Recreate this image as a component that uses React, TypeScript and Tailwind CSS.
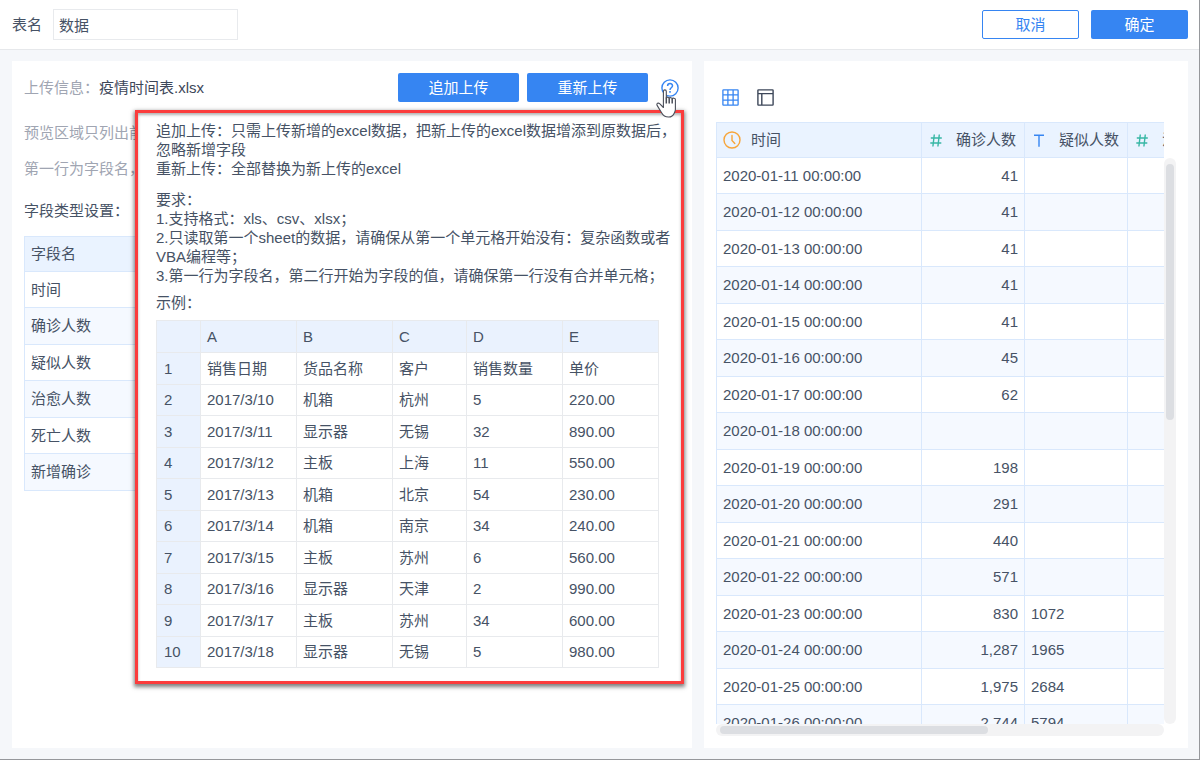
import { useState } from 'react';

const fields = ['时间', '确诊人数', '疑似人数', '治愈人数', '死亡人数', '新增确诊'];

const previewRows = [
  ['2020-01-11 00:00:00', '41', ''],
  ['2020-01-12 00:00:00', '41', ''],
  ['2020-01-13 00:00:00', '41', ''],
  ['2020-01-14 00:00:00', '41', ''],
  ['2020-01-15 00:00:00', '41', ''],
  ['2020-01-16 00:00:00', '45', ''],
  ['2020-01-17 00:00:00', '62', ''],
  ['2020-01-18 00:00:00', '', ''],
  ['2020-01-19 00:00:00', '198', ''],
  ['2020-01-20 00:00:00', '291', ''],
  ['2020-01-21 00:00:00', '440', ''],
  ['2020-01-22 00:00:00', '571', ''],
  ['2020-01-23 00:00:00', '830', '1072'],
  ['2020-01-24 00:00:00', '1,287', '1965'],
  ['2020-01-25 00:00:00', '1,975', '2684'],
  ['2020-01-26 00:00:00', '2,744', '5794'],
];

const sampleRows = [
  ['销售日期', '货品名称', '客户', '销售数量', '单价'],
  ['2017/3/10', '机箱', '杭州', '5', '220.00'],
  ['2017/3/11', '显示器', '无锡', '32', '890.00'],
  ['2017/3/12', '主板', '上海', '11', '550.00'],
  ['2017/3/13', '机箱', '北京', '54', '230.00'],
  ['2017/3/14', '机箱', '南京', '34', '240.00'],
  ['2017/3/15', '主板', '苏州', '6', '560.00'],
  ['2017/3/16', '显示器', '天津', '2', '990.00'],
  ['2017/3/17', '主板', '苏州', '34', '600.00'],
  ['2017/3/18', '显示器', '无锡', '5', '980.00'],
];

const GridIcon = () => (
  <svg className="w-[17px] h-[17px]" viewBox="0 0 17 17" fill="none" stroke="currentColor" strokeWidth="1.3">
    <rect x="0.9" y="0.9" width="15.2" height="15.2" rx="0.6" />
    <path d="M5.9 1v15M11.1 1v15M1 5.9h15M1 11.1h15" />
  </svg>
);

const LayoutIcon = () => (
  <svg className="w-[17px] h-[17px]" viewBox="0 0 17 17" fill="none" stroke="currentColor" strokeWidth="1.4">
    <rect x="0.9" y="0.9" width="15.2" height="15.2" rx="0.6" />
    <path d="M1 4.6h15M4.8 4.6V16" />
  </svg>
);

const ClockIcon = () => (
  <svg className="w-[18px] h-[18px] text-[#f7a53a]" viewBox="0 0 18 18" fill="none" stroke="currentColor" strokeWidth="1.4" strokeLinecap="round">
    <circle cx="9" cy="9" r="8" />
    <path d="M9 4.4V9.4l2.8 3" />
  </svg>
);

const HashIcon = () => (
  <svg className="w-3 h-[13px] text-[#37b7a5]" viewBox="0 0 12 13" fill="none" stroke="currentColor" strokeWidth="1.4">
    <path d="M4.3 0.5L2.9 12.5M9.3 0.5L7.9 12.5M0.8 4h11M0.3 9h11" />
  </svg>
);

const TextIcon = () => (
  <svg className="w-3 h-[13px] text-[#3685f2]" viewBox="0 0 12 13" fill="none" stroke="currentColor" strokeWidth="1.4">
    <path d="M1 1.2h10M6 1.2v11.6" />
  </svg>
);

const HelpIcon = () => (
  <svg className="w-[18px] h-[18px]" viewBox="0 0 18 18" fill="none" stroke="currentColor" strokeWidth="1.4">
    <circle cx="9" cy="9" r="8.1" />
    <path d="M6.6 7c0-3.300 4.900-3.300 4.900-.2 0 2-2.500 2-2.500 4.200" strokeWidth="1.500" />
    <path d="M9 12.100v1.600" strokeWidth="1.600" />
  </svg>
);

const HandCursor = () => (
  <svg className="absolute top-[10px] -left-1.5 z-20 w-[22px] h-[29px] pointer-events-none" viewBox="0 0 22 29" fill="#fff" stroke="#4a4e59" strokeWidth="1.1" strokeLinejoin="round">
    <path d="M8.400 18.500V2.400C8.400.4 11.300.4 11.300 2.400V9c.3-1.200 2.900-1.100 2.900.4.300-1.100 3-1 3 .5.300-1.100 3.200-1 3.200.6v10c0 1.600-.6 2.500-1.200 3.700C18.200 26.700 16.200 28 13.600 28c-3.800 0-5.700-1.700-7-4.300L2.100 16.400c-1-2 1.200-3 2.500-1.700z" />
    <path d="M11.300 8.600v6M14.200 9.300v5.300M17.200 10v4.600" strokeWidth="1.500" />
  </svg>
);

const UploadTips = () => (
  <div
    role="tooltip"
    className="absolute top-[49px] right-2 z-10 w-[549px] border-[3px] border-[#fb3c3c] bg-white pl-[18px] pt-2 pb-[13px] shadow-[0_2px_4px_1px_rgba(0,0,0,0.5),inset_0_2px_3px_rgba(0,0,0,0.3)]"
  >
    <div className="leading-[19px]">
      <p>追加上传：只需上传新增的excel数据，把新上传的excel数据增添到原数据后，忽略新增字段</p>
      <p>重新上传：全部替换为新上传的excel</p>
      <p className="mt-3">要求：</p>
      <p>1.支持格式：xls、csv、xlsx；</p>
      <p>2.只读取第一个sheet的数据，请确保从第一个单元格开始没有：复杂函数或者VBA编程等；</p>
      <p>3.第一行为字段名，第二行开始为字段的值，请确保第一行没有合并单元格；</p>
      <p className="mt-2">示例：</p>
    </div>
    <table className="mt-2 w-[502px] table-fixed border-collapse leading-5">
      <colgroup>
        <col className="w-[44px]" />
        <col className="w-[96px]" />
        <col className="w-[96px]" />
        <col className="w-[74px]" />
        <col className="w-[96px]" />
        <col className="w-[96px]" />
      </colgroup>
      <thead>
        <tr className="h-8 bg-[#eaf2fe]">
          <th className="border border-[#e8eaed]"></th>
          {['A', 'B', 'C', 'D', 'E'].map((letter) => (
            <th key={letter} className="border border-[#e8eaed] px-1.5 text-left font-normal">{letter}</th>
          ))}
        </tr>
      </thead>
      <tbody>
        {sampleRows.map((row, index) => (
          <tr key={index} className="h-8 even:h-[31px]">
            <th className="border border-[#e8eaed] bg-[#eaf2fe] px-[7px] text-left font-normal">{index + 1}</th>
            {row.map((cell, i) => (
              <td key={i} className="border border-[#e8eaed] px-1.5">{cell}</td>
            ))}
          </tr>
        ))}
      </tbody>
    </table>
  </div>
);

const FieldSettings = () => (
  <section className="relative min-w-0 flex-1 bg-white px-3 pt-3">
    <div className="flex items-center">
      <p className="flex-1 text-[#a0a5b2]">
        上传信息：<span className="text-[#3d4759]">疫情时间表.xlsx</span>
      </p>
      <button className="h-[29px] w-[121px] rounded-xs bg-[#3685f2] text-white">追加上传</button>
      <button className="ml-2 h-[29px] w-[121px] rounded-xs bg-[#3685f2] text-white">重新上传</button>
      <div className="relative ml-[13px] mr-[1px]">
        <button aria-label="帮助" className="block text-[#3685f2]">
          <HelpIcon />
        </button>
        <HandCursor />
      </div>
    </div>
    <p className="mt-5 text-[#a0a5b2]">预览区域只列出前</p>
    <p className="mt-3.5 text-[#a0a5b2]">第一行为字段名，</p>
    <p className="mt-5">字段类型设置：</p>
    <table className="mt-3.5 w-full border-collapse">
      <thead>
        <tr className="h-[35px] bg-[#eaf3ff]">
          <th className="border border-[#d9e8fc] px-1.5 text-left font-normal">字段名</th>
        </tr>
      </thead>
      <tbody>
        {fields.map((field) => (
          <tr key={field} className="h-9 even:h-[37px] even:bg-[#f5f9ff]">
            <td className="border border-[#d9e8fc] px-1.5">{field}</td>
          </tr>
        ))}
      </tbody>
    </table>
    <UploadTips />
  </section>
);

const DataPreview = () => (
  <section className="flex w-[484px] shrink-0 flex-col bg-white px-3 pb-3 pt-7">
    <div className="flex gap-[18px] px-1.5">
      <button aria-label="表格" className="text-[#3685f2]">
        <GridIcon />
      </button>
      <button aria-label="布局" className="text-[#3d4759]">
        <LayoutIcon />
      </button>
    </div>
    <div className="mt-4 flex min-h-0 flex-1">
      <div className="min-w-0 flex-1 overflow-hidden">
        <table className="w-[514px] table-fixed border-collapse">
          <colgroup>
            <col className="w-[205px]" />
            <col className="w-[103px]" />
            <col className="w-[103px]" />
            <col className="w-[103px]" />
          </colgroup>
          <thead>
            <tr className="h-[35px] bg-[#eaf3ff]">
              <th className="border border-[#d9e8fc] px-1.5 font-normal">
                <span className="flex items-center gap-2.5"><ClockIcon />时间</span>
              </th>
              <th className="border border-[#d9e8fc] px-2 font-normal">
                <span className="flex items-center justify-between"><HashIcon />确诊人数</span>
              </th>
              <th className="border border-[#d9e8fc] px-2 font-normal">
                <span className="flex items-center justify-between"><TextIcon />疑似人数</span>
              </th>
              <th className="border border-[#d9e8fc] px-2 font-normal">
                <span className="flex items-center justify-between"><HashIcon />治愈人数</span>
              </th>
            </tr>
          </thead>
          <tbody>
            {previewRows.map(([time, confirmed, suspected]) => (
              <tr key={time} className="h-9 even:h-[37px] even:bg-[#f5f9ff]">
                <td className="border border-[#d9e8fc] px-1.5">{time}</td>
                <td className="border border-[#d9e8fc] px-1.5 text-right">{confirmed}</td>
                <td className="border border-[#d9e8fc] px-1.5">{suspected}</td>
                <td className="border border-[#d9e8fc] px-1.5"></td>
              </tr>
            ))}
          </tbody>
        </table>
      </div>
      <div className="mt-9 w-3 rounded-full bg-[#f3f3f4] px-[2px] pt-1.5">
        <div className="h-[256px] rounded-full bg-[#dcdee2]"></div>
      </div>
    </div>
    <div className="mr-3 h-3 rounded-full bg-[#f3f3f4] px-1 py-[2px]">
      <div className="h-2 w-[268px] rounded-full bg-[#dcdee2]"></div>
    </div>
  </section>
);

const App = () => {
  const [tableName, setTableName] = useState('数据');

  return (
    <div className="flex h-screen flex-col border-b border-r border-[#96989c] bg-[#f5f7fa] font-['Liberation_Sans','Noto_Sans_CJK_SC',sans-serif] text-[15px] leading-[22px] text-[#465265]">
      <header className="flex h-[50px] shrink-0 items-center border-b border-[#e6e8eb] bg-white pl-3 pr-[11px]">
        <label htmlFor="table-name">表名</label>
        <input
          id="table-name"
          className="ml-[11px] h-[31px] w-[185px] border border-[#e8eaed] px-[5px] outline-none"
          value={tableName}
          onChange={(e) => setTableName(e.target.value)}
        />
        <button className="ml-auto h-[29px] w-[97px] rounded-xs border border-[#3685f2] bg-white text-[#3685f2]">取消</button>
        <button className="ml-3 h-[29px] w-[97px] rounded-xs bg-[#3685f2] text-white">确定</button>
      </header>
      <main className="flex min-h-0 flex-1 gap-3 py-[11px] pl-3 pr-[11px]">
        <FieldSettings />
        <DataPreview />
      </main>
    </div>
  );
};

export default App;
